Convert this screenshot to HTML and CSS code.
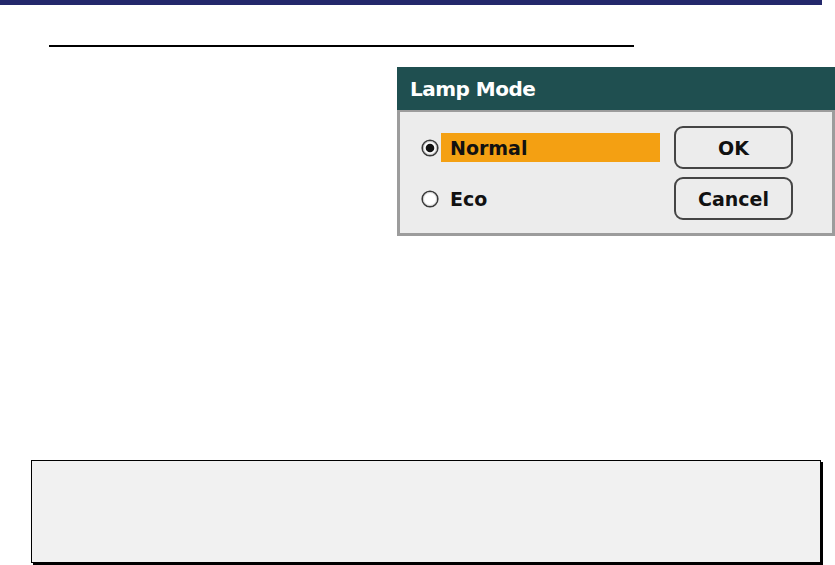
FILE: index.html
```html
<!DOCTYPE html>
<html>
<head>
<meta charset="utf-8">
<link rel="stylesheet" href="styles.css">
</head>
<body>
<div class="topbar"></div>
<div class="rule"></div>
<div class="dialog">
  <div class="dialog-title">Lamp Mode</div>
  <div class="dialog-body">
    <div class="options">
      <div class="option">
        <svg class="radio" width="18" height="18" viewBox="0 0 18 18"><circle cx="9" cy="9" r="7.8" fill="#fff" stroke="#3a3a3a" stroke-width="1.6"/><circle cx="9" cy="9" r="6.5" fill="none" stroke="#b0b0b0" stroke-width="0.8"/><circle cx="9" cy="9" r="4.3" fill="#111"/></svg>
        <span class="label selected">Normal</span>
      </div>
      <div class="option">
        <svg class="radio" width="18" height="18" viewBox="0 0 18 18"><circle cx="9" cy="9" r="7.8" fill="#fff" stroke="#3a3a3a" stroke-width="1.6"/><circle cx="9" cy="9" r="6.5" fill="none" stroke="#c8c8c8" stroke-width="0.8"/></svg>
        <span class="label">Eco</span>
      </div>
    </div>
    <div class="buttons">
      <div class="btn">OK</div>
      <div class="btn">Cancel</div>
    </div>
  </div>
</div>
<div class="note"></div>
</body>
</html>
```
FILE: styles.css
```css
html, body {
  margin: 0;
  padding: 0;
  background: #fff;
}
body {
  width: 835px;
  height: 565px;
  overflow: hidden;
  font-family: "DejaVu Sans", "Liberation Sans", sans-serif;
}
.topbar {
  width: 822px;
  height: 5px;
  background: #23286b;
}
.rule {
  margin-left: 49px;
  margin-top: 40px;
  width: 585px;
  height: 2px;
  background: #000;
}
.dialog {
  margin-left: 397px;
  margin-top: 20px;
  width: 438px;
}
.dialog-title {
  height: 43px;
  background: #1f4f50;
  color: #fff;
  font-weight: bold;
  font-size: 20px;
  line-height: 44px;
  padding-left: 13px;
  letter-spacing: -0.5px;
}
.dialog-body {
  height: 121px;
  background: #ececec;
  border: 3px solid #9c9c9c;
  border-top-width: 2px;
  display: flex;
}
.options {
  width: 260px;
  padding-top: 21px;
  padding-left: 22px;
  box-sizing: border-box;
  display: flex;
  flex-direction: column;
  gap: 22px;
}
.option {
  display: flex;
  align-items: center;
  height: 29px;
}
.radio {
  flex: none;
  margin-left: -1px;
  margin-right: 2px;
}
.label {
  font-weight: bold;
  font-size: 19px;
  color: #111;
  padding-left: 9px;
  line-height: 30px;
}
.label.selected {
  background: #f4a012;
  width: 219px;
  height: 29px;
  box-sizing: border-box;
}
.buttons {
  margin-left: 14px;
  padding-top: 14px;
  display: flex;
  flex-direction: column;
  gap: 8px;
}
.btn {
  width: 119px;
  height: 43px;
  box-sizing: border-box;
  border: 2px solid #454545;
  border-radius: 9px;
  display: flex;
  align-items: center;
  justify-content: center;
  font-weight: bold;
  font-size: 19px;
  color: #111;
  padding-top: 1px;
}
.note {
  margin-left: 31px;
  margin-top: 224px;
  width: 788px;
  height: 101px;
  background: #f1f1f1;
  border: 1px solid #000;
  box-shadow: 2px 2px 0 #000;
}
```
